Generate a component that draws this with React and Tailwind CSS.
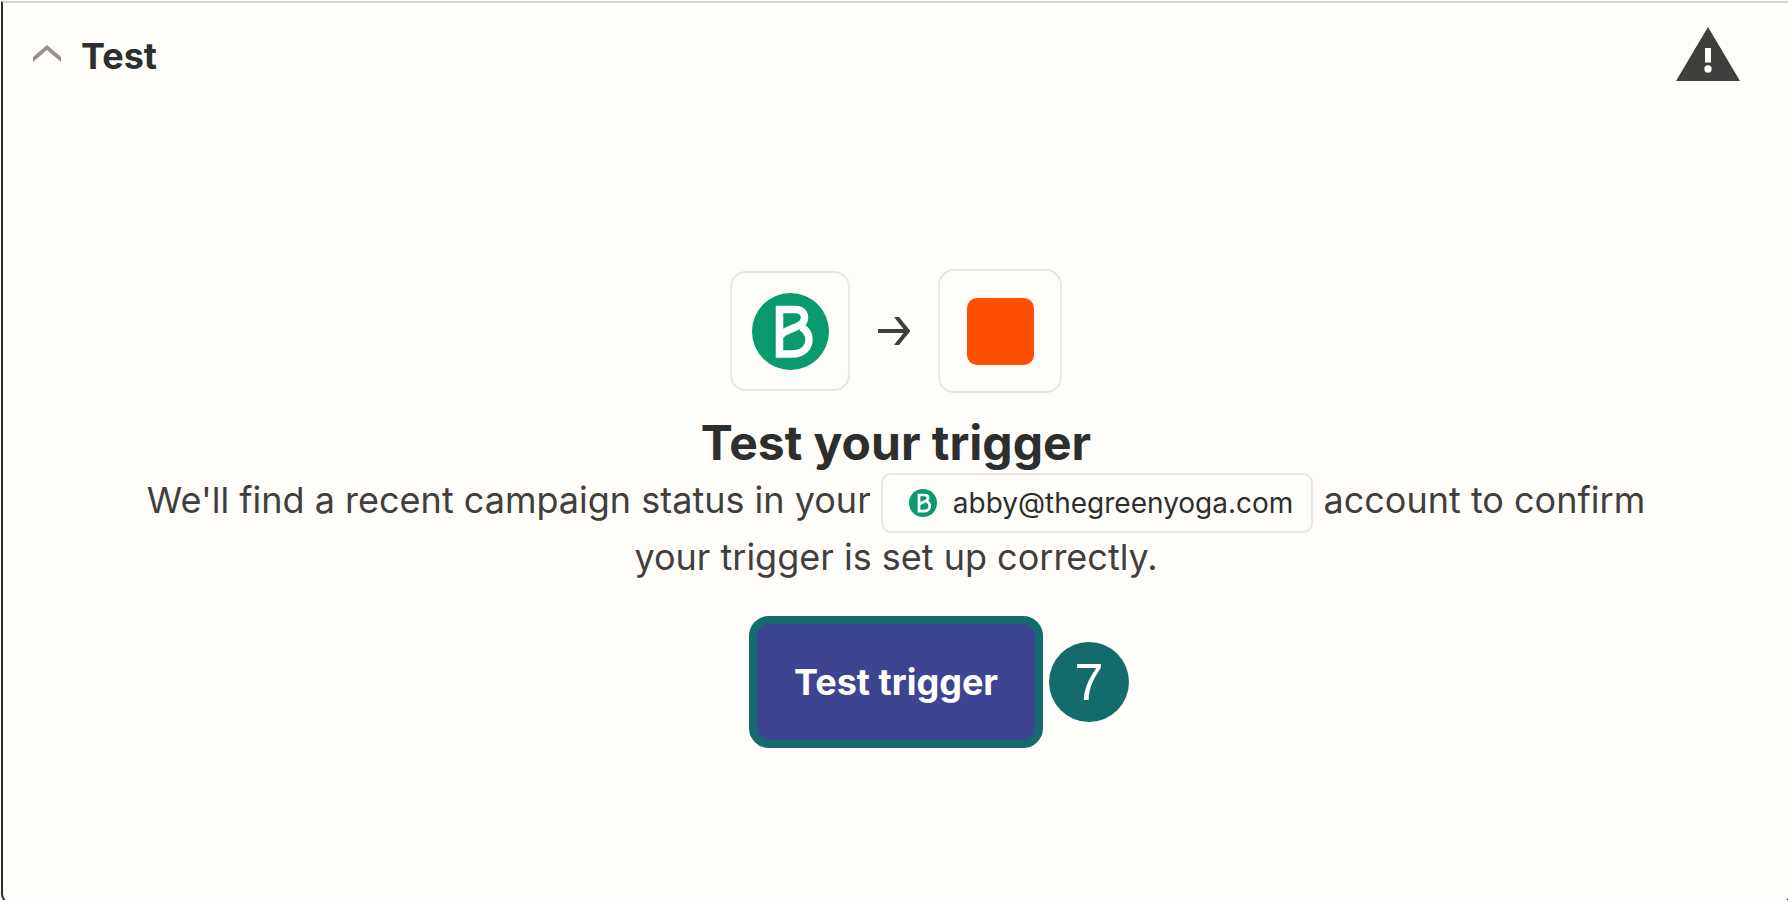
import React from "react";

function BrandIcon({ className }) {
  return (
    <svg viewBox="0 0 77 77" className={className} aria-hidden="true">
      <circle cx="38.5" cy="38.5" r="38.5" fill="#0b996e" />
      <path
        d="M27.500 61V16.500H43C49.500 16.500 52.500 20 52.500 24.500C52.500 36 34 34 27.500 43.500V61H40C51 61 57 54.500 57 46.500C57 40.500 53.500 36.500 49.500 34"
        fill="none"
        stroke="#fff"
        strokeWidth="7.500"
      />
    </svg>
  );
}

function SectionHeader() {
  return (
    <header className="flex items-center justify-between pt-6 pr-[49px] pl-7">
      <h1>
        <button type="button" aria-expanded="true" className="flex items-center gap-[18px] pt-px text-4xl font-bold text-[#2d2e2e]">
          <svg viewBox="0 0 32 32" className="size-8" aria-hidden="true">
            <path d="M2 17L16 5L30 17V22L16 10L2 22Z" fill="#95928e" />
          </svg>
          Test
        </button>
      </h1>
      <svg viewBox="0 0 64 56" className="h-14 w-16" role="img" aria-label="Warning">
        <path d="M32 0L64 54H0Z" fill="#413f3d" />
        <path d="M29 21H35V35.500H29Z" fill="#fffdf9" />
        <circle cx="32" cy="42" r="3.700" fill="#fffdf9" />
      </svg>
    </header>
  );
}

export default function App() {
  return (
    <div className="flex h-screen flex-col overflow-hidden bg-[#fffdf9] font-['Inter',sans-serif]">
      <section className="-mr-[3px] -mb-1 ml-px mt-px flex flex-1 flex-col rounded-b-[10px] border-2 border-[#2d2e2e] border-t-[#d7d5d2]">
        <SectionHeader />
        <main className="flex flex-1 flex-col items-center px-32 pt-[186px] text-center">
          <div className="flex items-center gap-7">
            <div className="flex size-[120px] items-center justify-center rounded-2xl border-2 border-[#e8e7e4]">
              <BrandIcon className="size-[77px]" />
            </div>
            <svg viewBox="0 0 32 32" className="size-8" fill="none" stroke="#413f3d" strokeWidth="4" aria-hidden="true">
              <path d="M0 16H30" />
              <path d="M16 2H21L32.500 16L21 30H16L27 16Z" fill="#413f3d" stroke="none" />
            </svg>
            <div className="flex size-[124px] items-center justify-center rounded-2xl border-2 border-[#e8e7e4]">
              <div className="size-[67px] rounded-[10px] bg-[#ff4f00]" />
            </div>
          </div>
          <h2 className="mt-5 text-5xl leading-[60px] font-bold text-[#2d2e2e]">Test your trigger</h2>
          <p className="text-4xl leading-[48px] text-[#413f3d]">
            We'll find a recent campaign status in your{" "}
            <span className="inline-flex h-[60px] items-center gap-4 rounded-[10px] border-2 border-[#e8e7e4] pr-[18px] pl-[26px] align-middle text-[28px] text-[#2d2e2e]">
              <BrandIcon className="size-7" />
              abby@thegreenyoga.com
            </span>{" "}
            account to confirm your trigger is set up correctly.
          </p>
          <div className="relative mt-[35px]">
            <button
              type="button"
              className="rounded-[20px] border-8 border-[#136c6b] bg-[#3d4592] px-[37px] py-[38px] text-4xl font-bold text-white"
            >
              Test trigger
            </button>
            <span className="absolute top-1/2 left-full ml-1.5 flex size-20 -translate-y-1/2 items-center justify-center rounded-full bg-[#136c6b] font-['Liberation_Sans',sans-serif] text-[52px] text-white">
              7
            </span>
          </div>
        </main>
      </section>
    </div>
  );
}
